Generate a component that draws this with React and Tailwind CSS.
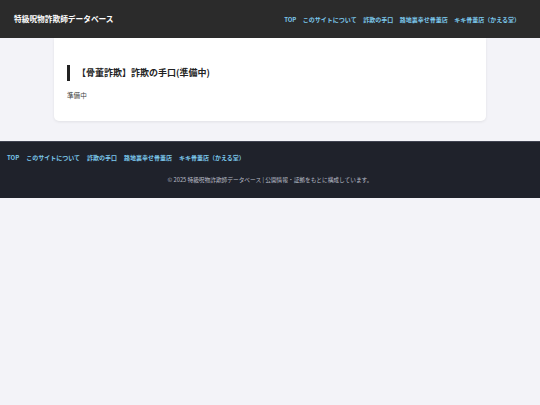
const NAV = ['TOP', 'このサイトについて', '詐欺の手口', '路地裏幸せ骨董店', 'キキ骨董店（かえる堂）'];

const font = { fontFamily: '"Noto Sans CJK JP", "Noto Sans", sans-serif' };

export default function App() {
  return (
    <div className="min-h-[405px] bg-[#f3f3f8]" style={font}>
      <header className="flex h-[38px] items-center justify-between bg-[#2b2b2b] pl-[14px] pr-[20px]">
        <h1 className="text-[7.7px] font-bold text-white">特級呪物詐欺師データベース</h1>
        <nav className="flex gap-[6.5px]">
          {NAV.map((n) => (
            <a key={n} className="text-[6px] font-bold text-[#7cc8ec]">
              {n}
            </a>
          ))}
        </nav>
      </header>

      <main className="mx-[54px] mb-[20px]">
        <section className="rounded-b-[5px] bg-white px-[13px] pt-[27px] pb-[20px] shadow-[0_1px_3px_rgba(0,0,0,0.08)]">
          <h2 className="border-l-[3px] border-[#222] pl-[7px] text-[9px] leading-[16px] font-bold text-[#222]">
            【骨董詐欺】詐欺の手口(準備中)
          </h2>
          <p className="mt-[10px] text-[6.6px] text-[#444]">準備中</p>
        </section>
      </main>

      <footer className="border-t border-[#3f4250] bg-[#1f222b] pb-[14px]">
        <nav className="flex gap-[7px] px-[7px] pt-[11px]">
          {NAV.map((n) => (
            <a key={n} className="text-[6px] font-bold text-[#7cc8ec]">
              {n}
            </a>
          ))}
        </nav>
        <p className="mt-[14px] text-center text-[5.7px] text-[#b8bcc6]">
          © 2025 特級呪物詐欺師データベース | 公開情報・証拠をもとに構成しています。
        </p>
      </footer>
    </div>
  );
}
